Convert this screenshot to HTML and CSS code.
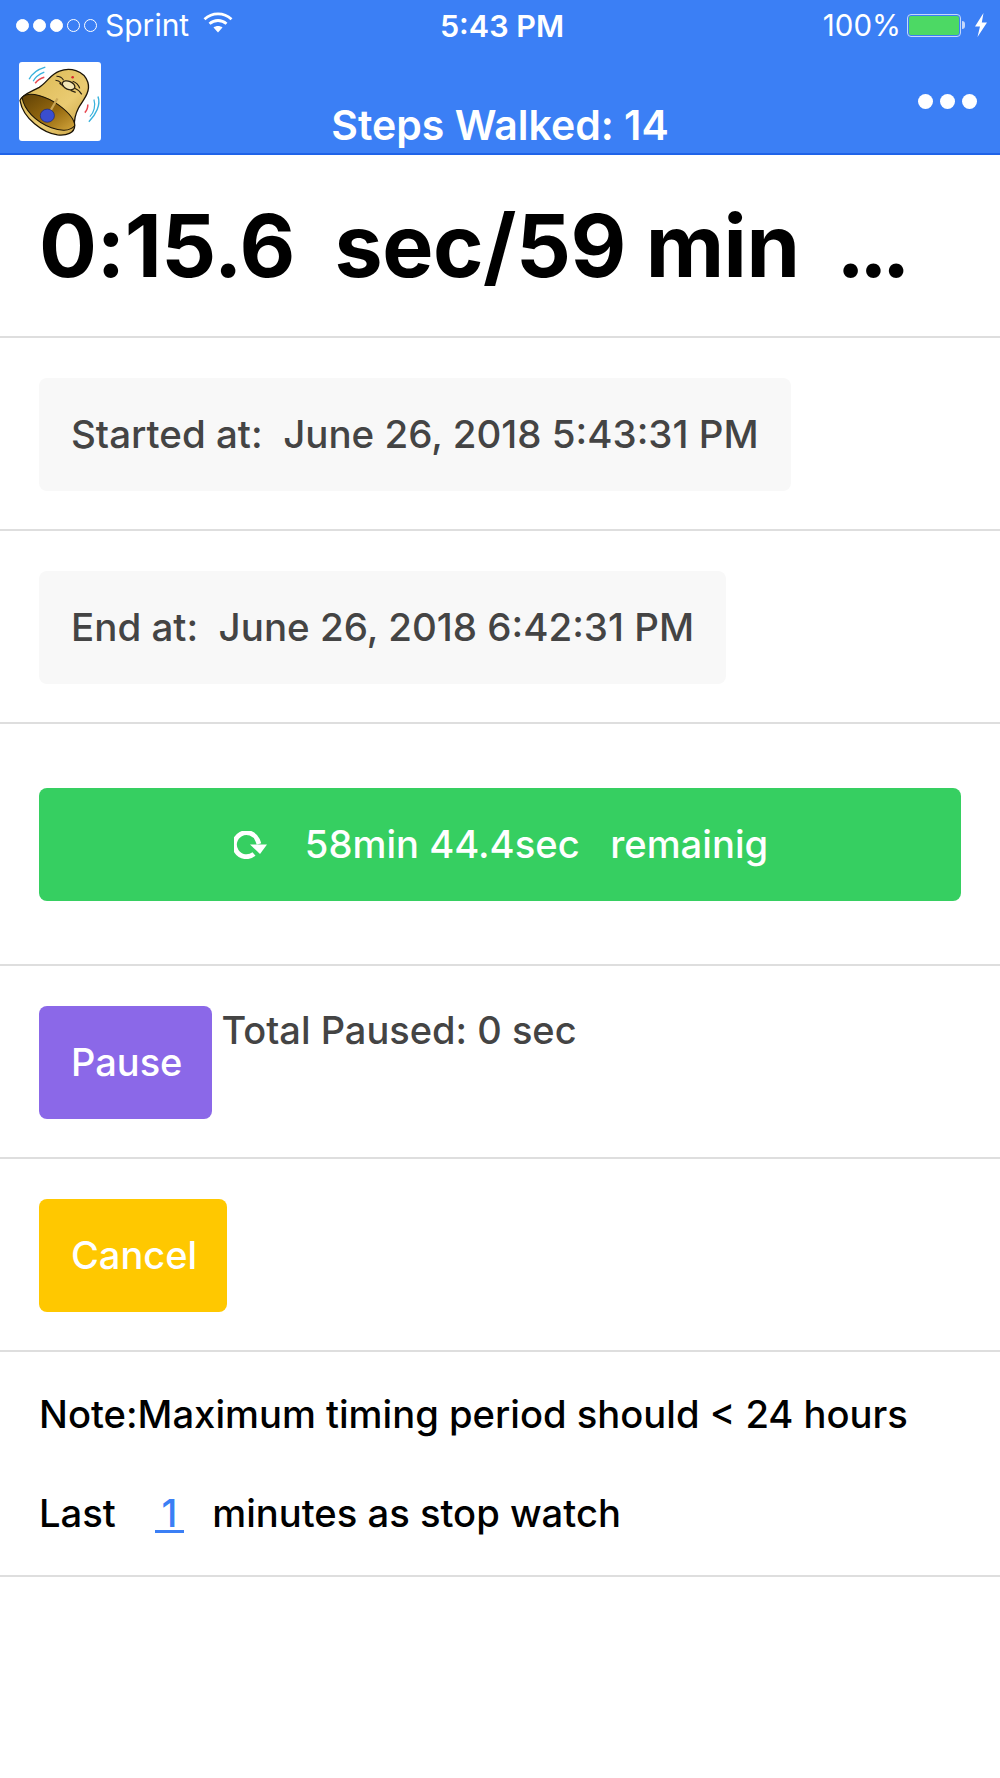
FILE: index.html
```html
<!DOCTYPE html>
<html lang="en">
<head>
<meta charset="utf-8">
<title>Steps Walked</title>
<link rel="stylesheet" href="styles.css">
</head>
<body>
<header class="app-header">
  <div class="status-bar">
    <div class="status-left">
      <span class="signal"><i class="dot on"></i><i class="dot on"></i><i class="dot on"></i><i class="dot"></i><i class="dot"></i></span>
      <span class="carrier">Sprint</span>
      <svg class="wifi" viewBox="0 0 30 24" aria-hidden="true">
        <path d="M1.500 8.200C9.200 1.200 20.800 1.200 28.500 8.200" fill="none" stroke="#fff" stroke-width="2.800"/>
        <path d="M6.500 12.800C11.500 8.400 18.500 8.400 23.500 12.800" fill="none" stroke="#fff" stroke-width="2.800"/>
        <path d="M10.500 16.600C13 14.600 17 14.600 19.500 16.600L15 21.500Z" fill="#fff"/>
      </svg>
    </div>
    <div class="clock">5:43 PM</div>
    <div class="status-right">
      <span class="percent">100%</span>
      <span class="battery"><span class="battery-level"></span></span><span class="battery-tip"></span>
      <svg class="bolt" viewBox="0 0 14 24" aria-hidden="true"><path d="M9.500 0 1 13.500H6L3.500 24 13 9.500H7.800Z" fill="#fff"/></svg>
    </div>
  </div>
  <div class="nav-bar">
    <svg class="logo" viewBox="0 0 81 78" aria-hidden="true">
      <defs>
        <linearGradient id="inner" x1="0" y1="0" x2="1" y2="1">
          <stop offset="0" stop-color="#5f4106"/>
          <stop offset=".55" stop-color="#96690f"/>
          <stop offset="1" stop-color="#d3a63c"/>
        </linearGradient>
        <linearGradient id="shell" x1="0" y1="0" x2="1" y2="1">
          <stop offset="0" stop-color="#d9b64f"/>
          <stop offset=".6" stop-color="#eacb72"/>
          <stop offset="1" stop-color="#c29a3a"/>
        </linearGradient>
      </defs>
      <rect width="81" height="78" rx="3" fill="#fff"/>
      <path d="M10 17C13 11 19 7 26 5" fill="none" stroke="#39b2dc" stroke-width="1.400"/>
      <path d="M14 19C16 15 20 12 25 10" fill="none" stroke="#39b2dc" stroke-width="1.200"/>
      <path d="M16 21C18 18 21 16 25 15" fill="none" stroke="#e8474f" stroke-width="1.500"/>
      <path d="M78 34C81 42 76 52 69 59" fill="none" stroke="#39b2dc" stroke-width="1.400"/>
      <path d="M74 37C76 43 74 50 70 54" fill="none" stroke="#39b2dc" stroke-width="1.200"/>
      <path d="M68 42C68 45 67 48 65 50" fill="none" stroke="#e8474f" stroke-width="1.500"/>
      <path d="M1 38C3 32 13 29 20 25C28 20 31 12 40 9C50 5 64 8 68 20C71 30 63 38 59 45C56 51 54 57 55 63C55 70 47 73 38 72C24 70 4 56 1 38Z" fill="url(#shell)" stroke="#1b1406" stroke-width="1.300"/>
      <path d="M3 35C10 28 28 34 40 43C48 49 55 57 55 63C50 69 40 68 32 65C16 59 5 47 3 35Z" fill="url(#inner)" stroke="#1b1406" stroke-width="1"/>
      <path d="M38 36 30 50" stroke="#c9a655" stroke-width="2.200"/>
      <ellipse cx="28" cy="53" rx="7" ry="6.500" fill="#3a4ecf" stroke="#1e2870" stroke-width=".7"/>
      <ellipse cx="49" cy="23" rx="6.500" ry="4" fill="#f4e6b6" stroke="#2a2010" stroke-width="1.300" transform="rotate(22 49 23)"/>
      <path d="M37 14C40 14 43 16 44 18M55 26C58 27 60 29 62 32M36 18C38 18 40 19 42 21M53 19C56 20 59 23 60 26M40 21 44 24M51 28 56 30" fill="none" stroke="#2a2010" stroke-width="1.100"/>
      <circle cx="53" cy="15" r="1.300" fill="#d9262e"/>
    </svg>
    <h1 class="title">Steps Walked: 14</h1>
    <div class="more"><i></i><i></i><i></i></div>
  </div>
</header>
<main>
  <section class="row timer-row"><div class="timer">0:15.6&nbsp; sec/59 min<span class="gap">&nbsp; </span><span class="ellipsis">...</span></div></section>
  <section class="row"><div class="info-box">Started at:&nbsp; June 26, 2018 5:43:31 PM</div></section>
  <section class="row"><div class="info-box">End at:&nbsp; June 26, 2018 6:42:31 PM</div></section>
  <section class="row progress-row">
    <div class="btn btn-green">
      <svg class="spin" viewBox="0 0 33 28" aria-hidden="true">
        <path d="M20 23A12 12 0 1 1 23.500 9L25 13" fill="none" stroke="#fff" stroke-width="4.800"/>
        <path d="M16 13.500H33L26 23Z" fill="#fff"/>
      </svg>
      <span class="remain">58min 44.4sec&nbsp;&nbsp; remainig</span>
    </div>
  </section>
  <section class="row pause-row">
    <div class="btn btn-purple">Pause</div>
    <span class="paused">Total Paused: 0 sec</span>
  </section>
  <section class="row"><div class="btn btn-yellow">Cancel</div></section>
  <section class="row note-row">
    <p class="note">Note:Maximum timing period should &lt; 24 hours</p>
    <p class="note last">Last <a class="minutes">1</a> minutes as stop watch</p>
  </section>
</main>
</body>
</html>
```
FILE: styles.css
```css
* { box-sizing: border-box; }
html, body { margin: 0; padding: 0; background: #fff; }
body { width: 1000px; height: 1778px; overflow: hidden; font-family: Inter, "Liberation Sans", sans-serif; }

.app-header { height: 155px; background: #3b7ff5; border-bottom: 2px solid #1f63e8; color: #fff; }
.status-bar { height: 52px; padding: 0 12px 2px 16px; display: grid; grid-template-columns: 1fr auto 1fr; align-items: center; font-size: 30px; }
.status-left { display: flex; align-items: center; }
.signal { display: flex; gap: 4px; margin-right: 8px; }
.dot { width: 13px; height: 13px; border-radius: 50%; border: 1px solid #fff; display: block; }
.dot.on { background: #fff; }
.wifi { width: 30px; height: 24px; margin-left: 14px; margin-top: -4px; }
.clock { font-weight: 600; font-size: 30.5px; }
.status-right { display: flex; align-items: center; justify-content: flex-end; }
.percent { margin-right: 6px; font-size: 29.5px; }
.battery { width: 54px; height: 23px; border: 1px solid #c5d8fb; border-radius: 4px; padding: 1px; display: block; }
.battery-level { display: block; height: 100%; background: #4cd964; border-radius: 2px; }
.battery-tip { width: 3px; height: 8px; background: #c5d8fb; border-radius: 0 3px 3px 0; margin-left: 1px; }
.bolt { width: 14px; height: 24px; margin-left: 9px; }

.nav-bar { position: relative; height: 101px; display: flex; justify-content: space-between; padding: 10px 23px 0 19px; }
.logo { width: 82px; height: 79px; display: block; }
.title { position: absolute; left: 0; right: 0; top: 50px; margin: 0; text-align: center; font-size: 41px; line-height: 46px; font-weight: 600; white-space: nowrap; }
.more { display: flex; gap: 7px; margin-top: 32px; }
.more i { width: 15px; height: 15px; background: #fff; border-radius: 50%; display: block; }

.row { padding: 40px 39px; border-bottom: 2px solid #dedede; height: 193px; }
.timer-row { height: 183px; padding: 0 39px; display: flex; align-items: center; }
.timer { font-size: 86px; font-weight: 700; color: #000; white-space: nowrap; letter-spacing: -0.5px; }
.gap { letter-spacing: -2px; }
.ellipsis { letter-spacing: -6px; }
.info-box { display: inline-block; height: 113px; line-height: 113px; padding: 0 32px; background: #f8f8f8; border-radius: 8px; color: #444; font-size: 38.5px; font-weight: 500; white-space: nowrap; }

.btn { height: 113px; line-height: 113px; padding: 0 30px 0 32px; border-radius: 8px; color: #fff; font-size: 38px; font-weight: 500; display: inline-block; }
.progress-row { height: 242px; padding: 64px 39px 0; }
.btn-green { background: #36cf61; display: flex; width: 922px; align-items: center; justify-content: center; font-size: 38.2px; }
.spin { width: 33px; height: 28px; margin-right: 38px; }
.remain { white-space: pre; }
.pause-row { display: flex; align-items: flex-start; gap: 9px; }
.btn-purple { background: #8b68e8; }
.paused { color: #444; font-size: 38px; font-weight: 500; line-height: 48px; }
.btn-yellow { background: #ffc800; }

.note-row { height: 225px; padding: 37px 39px 0; }
.note { margin: 0; color: #000; font-size: 38.2px; font-weight: 500; line-height: 50px; }
.note.last { margin-top: 49px; }
.minutes { display: inline-block; width: 29px; margin: 0 18px 0 29px; color: #3b7ff5; text-align: center; border-bottom: 3px solid #3b7ff5; line-height: 34px; }
```
